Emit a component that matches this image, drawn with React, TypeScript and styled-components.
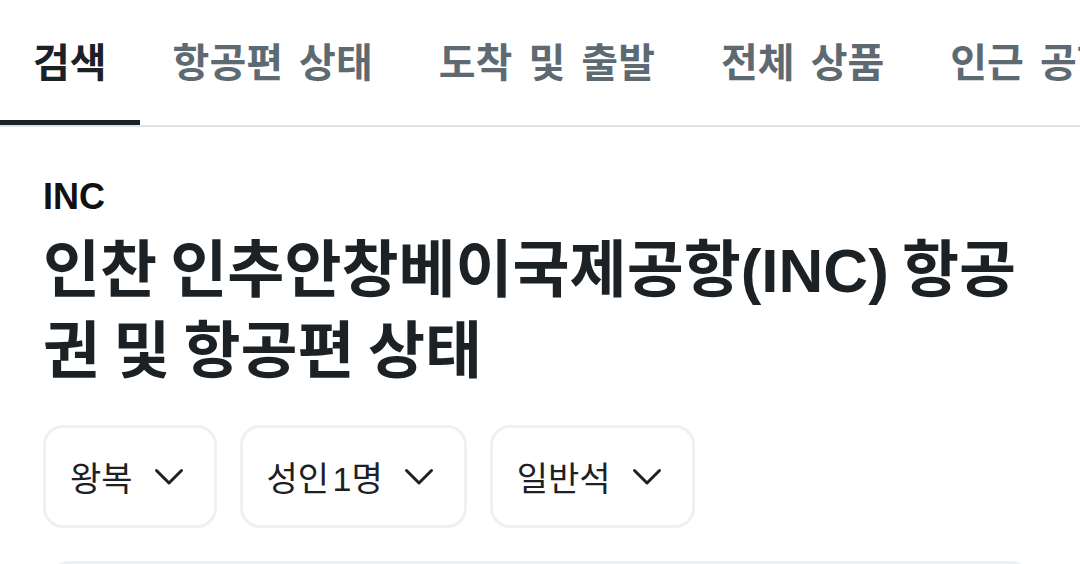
import React from "react";
import styled, { createGlobalStyle } from "styled-components";

const Global = createGlobalStyle`
  html, body { margin: 0; padding: 0; background: #ffffff; }
  body { font-family: "Liberation Sans", "Noto Sans CJK KR", sans-serif; color: #1b2124; overflow: hidden; }
`;

const Page = styled.div`
  width: 1080px;
  height: 564px;
  overflow: hidden;
`;

const TabBar = styled.nav`
  display: flex;
  border-bottom: 2px solid #dde3e6;
  white-space: nowrap;
  overflow: hidden;
`;

const Tab = styled.div<{ $active?: boolean }>`
  flex: none;
  height: 120px;
  padding: 0 33px;
  display: flex;
  align-items: center;
  font-size: 40px;
  font-weight: 700;
  word-spacing: 5px;
  color: ${(p) => (p.$active ? "#1b2124" : "#5e6a72")};
  border-bottom: 5px solid ${(p) => (p.$active ? "#1b2124" : "transparent")};
`;

const Content = styled.main`
  padding: 50px 43px 0;
`;

const Code = styled.div`
  font-size: 36px;
  font-weight: 700;
  line-height: 40px;
  color: #111;
`;

const Title = styled.h1`
  margin: 13px 0 0;
  font-size: 62px;
  font-weight: 700;
  line-height: 81px;
  word-spacing: -4px;
  color: #1b2124;
`;

const Filters = styled.div`
  display: flex;
  gap: 23px;
  margin-top: 33px;
`;

const Select = styled.button`
  height: 103px;
  box-sizing: border-box;
  display: flex;
  align-items: center;
  gap: 21px;
  padding: 0 30px 0 24px;
  background: #fff;
  border: 3px solid #eef1f3;
  border-radius: 20px;
  font-family: inherit;
  font-size: 34px;
  font-weight: 400;
  word-spacing: -6px;
  color: #1b2124;
`;

const Panel = styled.div`
  margin: 33px 4px 0 4px;
  height: 120px;
  border: 3px solid #eef1f3;
  border-radius: 22px;
`;

const Chevron = () => (
  <svg width="30" height="18" viewBox="0 0 30 18" fill="none">
    <path d="M2.5 2.5 L15 15 L27.5 2.5" stroke="#1b2124" strokeWidth="3" strokeLinecap="round" strokeLinejoin="round" />
  </svg>
);

const tabs = ["검색", "항공편 상태", "도착 및 출발", "전체 상품", "인근 공항"];
const selects = ["왕복", "성인 1명", "일반석"];

export default function App() {
  return (
    <Page>
      <Global />
      <TabBar>
        {tabs.map((t, i) => (
          <Tab key={t} $active={i === 0}>{t}</Tab>
        ))}
      </TabBar>
      <Content>
        <Code>INC</Code>
        <Title>인찬 인추안창베이국제공항(INC) 항공권 및 항공편 상태</Title>
        <Filters>
          {selects.map((s) => (
            <Select key={s}>
              {s}
              <Chevron />
            </Select>
          ))}
        </Filters>
        <Panel />
      </Content>
    </Page>
  );
}
